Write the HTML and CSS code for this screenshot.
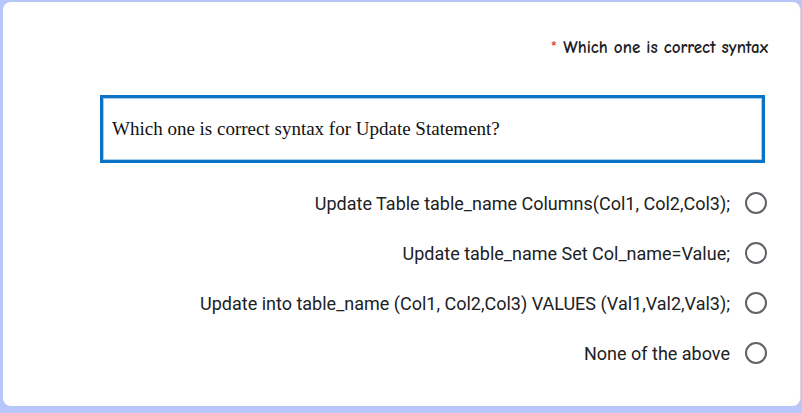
FILE: index.html
```html
<!DOCTYPE html>
<html>
<head>
<meta charset="utf-8">
<link rel="stylesheet" href="styles.css">
</head>
<body>
<div class="card">
  <div class="label"><span class="req">*</span> Which one is correct syntax</div>
  <div class="question">Which one is correct syntax for Update Statement?</div>
  <div class="options">
    <label class="option"><span class="text">Update Table table_name Columns(Col1, Col2,Col3);</span><span class="radio"></span></label>
    <label class="option"><span class="text">Update table_name Set Col_name=Value;</span><span class="radio"></span></label>
    <label class="option"><span class="text">Update into table_name (Col1, Col2,Col3) VALUES (Val1,Val2,Val3);</span><span class="radio"></span></label>
    <label class="option"><span class="text">None of the above</span><span class="radio"></span></label>
  </div>
</div>
</body>
</html>
```

FILE: styles.css
```css
html, body {
  margin: 0;
  padding: 0;
}
body {
  background: #b7c6fb;
  width: 802px;
  height: 413px;
  overflow: hidden;
}
.card {
  box-sizing: border-box;
  margin: 2px 2px 0 3px;
  height: 404px;
  background: #ffffff;
  border-radius: 8px;
  box-shadow: 1px 0 0 #d6d8de;
  padding: 35px 32px 0 0;
}
.label {
  text-align: right;
  font-family: "Comic Sans MS", "Comic Neue", "Lato", sans-serif;
  font-size: 17px;
  font-weight: 700;
  line-height: 22px;
  color: #202124;
}
.req {
  color: #d93025;
  font-weight: 400;
}
.question {
  box-sizing: border-box;
  margin: 36px 3px 0 97px;
  height: 68px;
  border: 3px solid #0b73c6;
  box-shadow: inset 0 0 0 1px #a9cdee;
  display: flex;
  align-items: center;
  padding: 0 0 0 9px;
  font-family: "Liberation Serif", "Times New Roman", serif;
  font-size: 19px;
  color: #111;
}
.options {
  display: flex;
  flex-direction: column;
  margin-top: 15px;
  padding-right: 1px;
}
.option {
  display: flex;
  justify-content: flex-end;
  align-items: center;
  gap: 15px;
  height: 50px;
  font-family: Roboto, "Liberation Sans", sans-serif;
  font-size: 18px;
  color: #202124;
}
.radio {
  box-sizing: border-box;
  width: 22px;
  height: 22px;
  border: 2px solid #5f6368;
  border-radius: 50%;
}
```
